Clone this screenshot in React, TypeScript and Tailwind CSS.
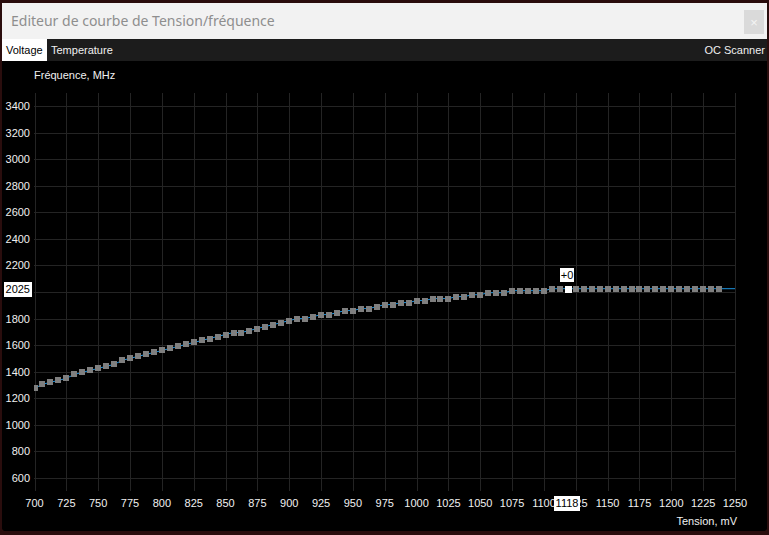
import React from 'react'

// page-space helpers (chart svg is translated so these map to screen pixels)
const X0 = 34.5
const X1 = 735
const xOf = (v: number) => X0 + ((v - 700) / 550) * (X1 - X0)
const yOf = (f: number) => 106 + (3400 - f) * ((478 - 106) / 2800)

const anchors: [number, number][] = [
  [700, 1280], [730, 1370], [767, 1475], [799, 1558], [835, 1648], [875, 1724],
  [900, 1784], [937, 1844], [968, 1889], [999, 1935], [1037, 1965], [1062, 1995],
  [1086, 2010], [1118.75, 2025],
]

function rawFreq(v: number) {
  if (v >= anchors[anchors.length - 1][0]) return 2025
  for (let i = 0; i < anchors.length - 1; i++) {
    const [va, fa] = anchors[i]
    const [vb, fb] = anchors[i + 1]
    if (v >= va && v <= vb) return fa + ((v - va) / (vb - va)) * (fb - fa)
  }
  return anchors[0][1]
}

const points = Array.from({ length: 87 }, (_, i) => {
  const v = 700 + i * 6.25
  const f = 2025 - 15 * Math.round((2025 - rawFreq(v)) / 15)
  return { v, f, x: xOf(v), y: yOf(f) }
})
const SELECTED = 67

const xTicks = Array.from({ length: 23 }, (_, i) => 700 + i * 25)
const yTicks = Array.from({ length: 15 }, (_, i) => 600 + i * 200)

const font = '"Liberation Sans", Arial, sans-serif'

function Chart() {
  const line = points.map((p) => `${p.x.toFixed(1)},${p.y.toFixed(1)}`).join(' ') + ` ${X1},${yOf(2025).toFixed(1)}`
  const sel = points[SELECTED]
  return (
    <svg width={765} height={470} className="block">
      <defs>
        <clipPath id="plot">
          <rect x={34} y={90} width={702} height={402} />
        </clipPath>
      </defs>
      <g transform="translate(-2,-61)" fontFamily={font} fontSize={11}>
        <text x={34} y={79} fill="#f0f0f0">Fréquence, MHz</text>

        {xTicks.map((v) => (
          <line key={v} x1={Math.round(xOf(v)) + 0.5} x2={Math.round(xOf(v)) + 0.5} y1={93} y2={491} stroke="#242424" />
        ))}
        {yTicks.map((f) => (
          <line key={f} x1={34} x2={X1} y1={Math.round(yOf(f)) + 0.5} y2={Math.round(yOf(f)) + 0.5} stroke="#242424" />
        ))}

        {/* 2000 is hidden under the current-value marker */}
        {yTicks.filter((f) => f !== 2000).map((f) => (
          <text key={f} x={30} y={Math.round(yOf(f)) + 4} textAnchor="end" fill="#f0f0f0">{f}</text>
        ))}
        <rect x={4} y={282} width={28} height={15} fill="#ffffff" />
        <text x={30} y={293} textAnchor="end" fill="#000000">2025</text>

        {xTicks.map((v) => (
          <text key={v} x={xOf(v)} y={507} textAnchor="middle" fill="#f0f0f0">{v}</text>
        ))}
        <rect x={554} y={496} width={26} height={15} fill="#ffffff" />
        <text x={567} y={507} textAnchor="middle" fill="#000000">1118</text>

        <text x={737} y={525} textAnchor="end" fill="#f0f0f0">Tension, mV</text>

        <g clipPath="url(#plot)">
          <polyline points={line} fill="none" stroke="#1c94e0" strokeWidth={1} />
          {points.map((p, i) =>
            i === SELECTED ? null : (
              <rect key={i} x={Math.round(p.x) - 3} y={Math.round(p.y) - 3} width={6} height={6} fill="#7f7f7f" />
            ),
          )}
          <rect x={Math.round(sel.x) - 3} y={Math.round(sel.y) - 3} width={7} height={7} fill="#ffffff" />
        </g>

        <rect x={560} y={268} width={14} height={14} fill="#ffffff" />
        <text x={567} y={279} textAnchor="middle" fill="#000000">+0</text>
      </g>
    </svg>
  )
}

export default function App() {
  return (
    <div className="w-[769px] h-[535px] bg-[#2a0d0d] pt-[3px] pl-[2px] overflow-hidden">
      <div className="w-[765px] h-[528px] flex flex-col bg-black rounded-b-[4px] overflow-hidden">
        <div className="h-[36px] bg-[#f2f2f2] flex items-start justify-between pl-[9px] pr-[3px]">
          <span className="mt-[8px] text-[14px] text-[#8e8e8e] leading-[20px]" style={{ fontFamily: '"Noto Sans", "Open Sans", sans-serif' }}>
            Editeur de courbe de Tension/fréquence
          </span>
          <div className="mt-[7px] w-[20px] h-[24px] bg-[#dadada] flex items-center justify-center text-[13px] text-[#f4f4f4] leading-none" style={{ fontFamily: font }}>
            ×
          </div>
        </div>
        <div className="h-[22px] bg-[#1c1c1c] flex items-stretch text-[11px] leading-none" style={{ fontFamily: font }}>
          <div className="w-[45px] bg-white text-black flex items-center pl-[4px]">Voltage</div>
          <div className="text-[#f0f0f0] flex items-center pl-[4px]">Temperature</div>
          <div className="ml-auto text-[#f0f0f0] flex items-center pr-[2px]">OC Scanner</div>
        </div>
        <div className="flex-1 bg-black">
          <Chart />
        </div>
      </div>
    </div>
  )
}
